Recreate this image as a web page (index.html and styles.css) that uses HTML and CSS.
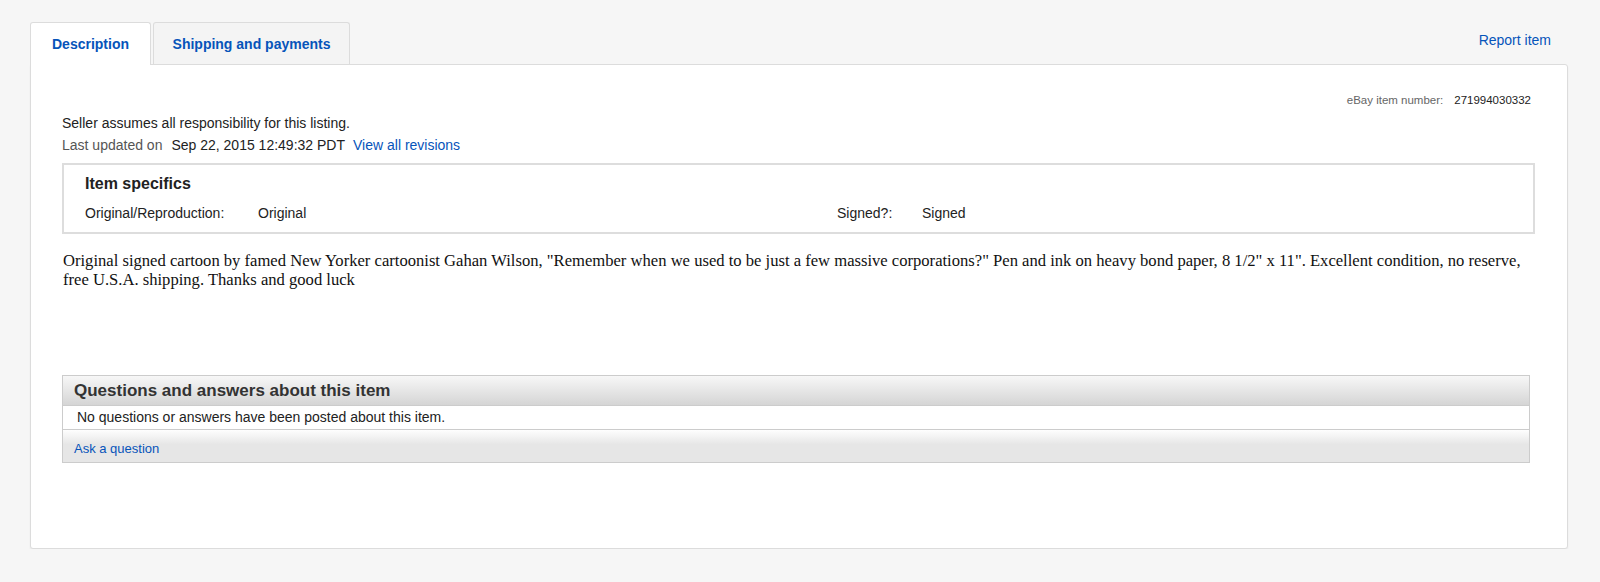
FILE: index.html
```html
<!DOCTYPE html>
<html>
<head>
<meta charset="utf-8">
<link rel="stylesheet" href="styles.css">
</head>
<body>
<div class="wrap">
  <div class="tabbar">
    <div class="tabs">
      <a class="tab active">Description</a>
      <a class="tab ship">Shipping and payments</a>
    </div>
    <a class="report">Report item</a>
  </div>
  <div class="panel">
    <div class="itemnum"><span class="lbl">eBay item number:</span><span class="num">271994030332</span></div>
    <div class="seller">Seller assumes all responsibility for this listing.</div>
    <div class="updated"><span class="lbl">Last updated on</span><span class="date">Sep 22, 2015 12:49:32 PDT</span><a class="link">View all revisions</a></div>
    <div class="specs">
      <h2 class="specs-title">Item specifics</h2>
      <div class="specs-row">
        <div class="pair"><span class="k">Original/Reproduction:</span><span class="v">Original</span></div>
        <div class="pair pair2"><span class="k k2">Signed?:</span><span class="v">Signed</span></div>
      </div>
    </div>
    <p class="desc">Original signed cartoon by famed New Yorker cartoonist Gahan Wilson, "Remember when we used to be just a few massive corporations?" Pen and ink on heavy bond paper, 8 1/2" x 11". Excellent condition, no reserve, free U.S.A. shipping. Thanks and good luck</p>
    <div class="qa">
      <div class="qa-head">Questions and answers about this item</div>
      <div class="qa-body">No questions or answers have been posted about this item.</div>
      <div class="qa-foot"><a class="link ask">Ask a question</a></div>
    </div>
  </div>
</div>
</body>
</html>
```
FILE: styles.css
```css
html, body {
  margin: 0;
  padding: 0;
  background: #f6f6f6;
  font-family: "Liberation Sans", Arial, sans-serif;
  color: #333;
}
a { text-decoration: none; color: #0654ba; cursor: pointer; }
.wrap {
  padding: 22px 32px 0 30px;
  width: 1538px;
}
.tabbar {
  display: flex;
  justify-content: space-between;
  align-items: flex-end;
  height: 42px;
}
.tabs {
  display: flex;
  gap: 2px;
  height: 42px;
  position: relative;
  z-index: 2;
}
.tab {
  box-sizing: border-box;
  height: 43px;
  border: 1px solid #dcdcdc;
  border-bottom: none;
  border-radius: 3px 3px 0 0;
  background: #f3f3f3;
  font-weight: bold;
  font-size: 14px;
  line-height: 42px;
  text-align: center;
}
.tab.active { width: 121px; background: #fff; }
.tab.ship { width: 197px; background: #f4f4f4; height: 42px; }
.report {
  font-size: 14px;
  line-height: 18px;
  margin-right: 17px;
  margin-bottom: 15px;
}
.panel {
  box-sizing: border-box;
  height: 485px;
  background: #fff;
  border: 1px solid #dcdcdc;
  border-radius: 0 3px 3px 3px;
  box-shadow: 0 2px 2px rgba(0,0,0,0.06);
  padding: 28px 32px 0 31px;
}
.itemnum {
  display: flex;
  justify-content: flex-end;
  font-size: 11.5px;
  padding-right: 4px;
  line-height: 14px;
}
.itemnum .lbl { color: #666; margin-right: 11px; }
.itemnum .num { color: #222; }
.seller {
  font-size: 14px;
  line-height: 17px;
  margin-top: 8px;
  color: #222;
}
.updated {
  font-size: 14px;
  line-height: 17px;
  margin-top: 5px;
}
.updated .lbl { color: #555; margin-right: 9px; }
.updated .date { color: #222; margin-right: 8px; }
.specs {
  margin-top: 9px;
  border: 2px solid #dddddd;
  height: 71px;
  box-sizing: border-box;
  padding: 9px 20px 0 21px;
}
.specs-title {
  margin: 0;
  font-size: 16px;
  line-height: 19px;
  font-weight: bold;
  color: #222;
}
.specs-row {
  display: flex;
  margin-top: 12px;
  font-size: 14px;
  line-height: 17px;
  color: #222;
}
.pair { display: flex; }
.pair:first-child { width: 752px; }
.pair .k { width: 173px; }
.pair .k2 { width: 85px; }
.desc {
  font-family: "Liberation Serif", "Times New Roman", serif;
  font-size: 16.6px;
  line-height: 19px;
  color: #111;
  margin: 17px 0 0 1px;
}
.qa {
  margin-top: 86px;
  border: 1px solid #cccccc;
  width: 1466px;
}
.qa-head {
  height: 29px;
  line-height: 29px;
  background: linear-gradient(#f7f7f7, #d5d5d5);
  border-bottom: 1px solid #cccccc;
  font-weight: bold;
  font-size: 17px;
  color: #333;
  padding-left: 11px;
}
.qa-body {
  height: 23px;
  line-height: 23px;
  font-size: 14px;
  color: #222;
  padding-left: 14px;
  border-bottom: 1px solid #cccccc;
}
.qa-foot {
  height: 32px;
  line-height: 36px;
  background: linear-gradient(#fefefe, #e6e6e6 45%, #e6e6e6);
  padding-left: 11px;
}
.ask { font-size: 13px; }
```
